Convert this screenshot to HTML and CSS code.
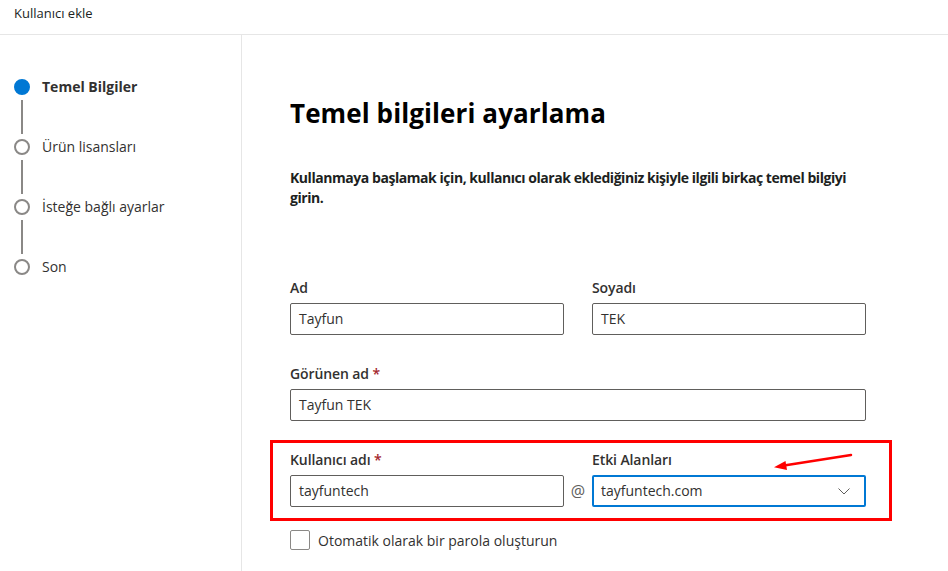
FILE: index.html
```html
<!DOCTYPE html>
<html lang="tr">
<head>
<meta charset="utf-8">
<title>Kullanıcı ekle</title>
<link rel="stylesheet" href="styles.css">
</head>
<body>
<div class="app">
  <header class="topbar">Kullanıcı ekle</header>
  <div class="body">
    <nav class="steps">
      <div class="step active"><span class="dot"></span><span class="step-label">Temel Bilgiler</span></div>
      <div class="connector"></div>
      <div class="step"><span class="dot"></span><span class="step-label">Ürün lisansları</span></div>
      <div class="connector"></div>
      <div class="step"><span class="dot"></span><span class="step-label">İsteğe bağlı ayarlar</span></div>
      <div class="connector"></div>
      <div class="step"><span class="dot"></span><span class="step-label">Son</span></div>
    </nav>
    <main class="main">
      <h1 class="title">Temel bilgileri ayarlama</h1>
      <p class="desc">Kullanmaya başlamak için, kullanıcı olarak eklediğiniz kişiyle ilgili birkaç temel bilgiyi girin.</p>
      <div class="row two">
        <div class="field">
          <label class="label">Ad</label>
          <div class="input">Tayfun</div>
        </div>
        <div class="field">
          <label class="label">Soyadı</label>
          <div class="input">TEK</div>
        </div>
      </div>
      <div class="row">
        <div class="field">
          <label class="label">Görünen ad <span class="req">*</span></label>
          <div class="input">Tayfun TEK</div>
        </div>
      </div>
      <div class="row user">
        <label class="label">Kullanıcı adı <span class="req">*</span></label>
        <span></span>
        <label class="label">Etki Alanları</label>
        <div class="input">tayfuntech</div>
        <span class="at">@</span>
        <div class="input select">tayfuntech.com
          <svg class="chev" width="12" height="7" viewBox="0 0 12 7"><path d="M0.5 0.5 L6 6 L11.5 0.5" fill="none" stroke="#605e5c" stroke-width="1"/></svg>
        </div>
        <div class="highlight"></div>
        <svg class="arrow" width="84" height="20" viewBox="0 0 84 20"><path d="M80 2 L13 12.6" stroke="#ff0000" stroke-width="2.5" stroke-linecap="round" fill="none"/><path d="M3 14.2 L14.5 8 L16 17 Z" fill="#ff0000"/></svg>
      </div>
      <label class="check"><span class="box"></span><span>Otomatik olarak bir parola oluşturun</span></label>
    </main>
  </div>
</div>
</body>
</html>
```
FILE: styles.css
```css
* { box-sizing: border-box; }
html, body { margin: 0; padding: 0; background: #fff; }
body {
  font-family: "Segoe UI", "Open Sans", "Noto Sans", sans-serif;
  color: #323130;
  font-size: 14px;
  overflow: hidden;
}
.app { width: 948px; height: 571px; display: flex; flex-direction: column; }
.topbar {
  height: 35px;
  padding: 4px 0 0 14px;
  font-size: 13px;
  line-height: 18px;
  border-bottom: 1px solid #e6e6e6;
  color: #201f1e;
}
.body { flex: 1; display: flex; }
.steps {
  width: 242px;
  border-right: 1px solid #e6e6e6;
  padding: 43px 0 0 14px;
  display: flex;
  flex-direction: column;
}
.step { display: flex; align-items: center; height: 18px; gap: 12px; }
.dot {
  width: 16px; height: 16px; border-radius: 50%;
  border: 2px solid #8a8886; background: #fff; flex: none;
}
.step.active .dot { background: #0078d4; border-color: #0078d4; }
.step-label { font-size: 14px; color: #323130; line-height: 18px; }
.step.active .step-label { font-weight: 700; }
.connector {
  width: 2px; height: 34px; background: #8a8886;
  margin: 4px 0 4px 7px;
}
.main { flex: 1; padding: 0 0 0 48px; position: relative; }
.title {
  margin: 58px 0 0;
  font-size: 26px;
  font-weight: 700;
  line-height: 40px;
  color: #000;
  letter-spacing: 0.1px;
}
.desc {
  margin: 35px 0 0;
  width: 576px;
  font-weight: 700;
  line-height: 20px;
  font-size: 14px;
  letter-spacing: -0.45px;
  color: #201f1e;
}
.row { width: 576px; }
.row + .row { margin-top: 29px; }
.row.two { margin-top: 70px; display: grid; grid-template-columns: 1fr 1fr; column-gap: 28px; }
.field { display: flex; flex-direction: column; }
.label { font-size: 14px; line-height: 20px; font-weight: 600; color: #323130; margin-bottom: 5px; display: block; letter-spacing: -0.1px; }
.req { color: #a4262c; }
.input {
  height: 32px;
  border: 1px solid #605e5c;
  border-radius: 2px;
  padding: 0 8px;
  line-height: 30px;
  font-size: 14px;
  color: #323130;
}
.row.user {
  position: relative;
  display: grid;
  grid-template-columns: 1fr 28px 1fr;
}
.at { color: #605e5c; font-size: 16px; line-height: 32px; text-align: center; }
.select {
  border: 2px solid #0078d4;
  line-height: 28px;
  padding-left: 7px;
  display: flex;
  justify-content: space-between;
  align-items: center;
}
.chev { margin-right: 6px; }
.highlight {
  position: absolute;
  left: -20px; top: -10px;
  width: 622px; height: 81px;
  border: 3px solid #ff0000;
  pointer-events: none;
}
.arrow { position: absolute; left: 481px; top: 3px; }
.check {
  display: flex; align-items: center; gap: 8px;
  margin-top: 23px;
  font-size: 14px;
  color: #323130;
}
.box { width: 20px; height: 20px; border: 1px solid #8a8886; border-radius: 2px; flex: none; }
```
